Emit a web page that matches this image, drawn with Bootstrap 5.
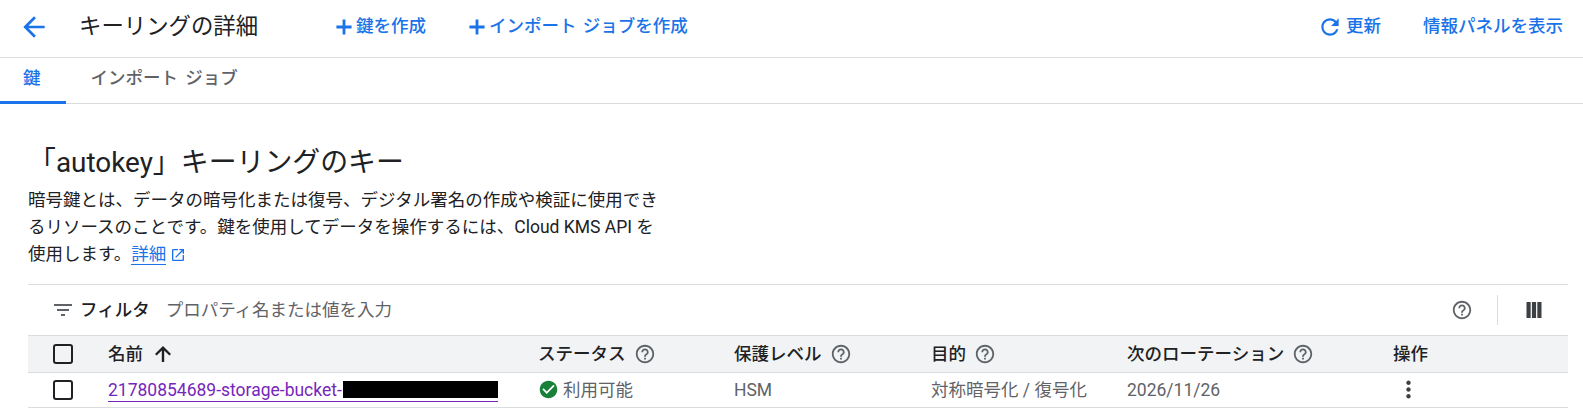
<!DOCTYPE html>
<html lang="ja">
<head>
  <meta charset="UTF-8">
  <meta name="viewport" content="width=device-width, initial-scale=1.0">
  <link href="https://cdn.jsdelivr.net/npm/bootstrap@5.3.0/dist/css/bootstrap.min.css" rel="stylesheet">
  <style>
    body {
      font-family: Roboto, "Noto Sans CJK JP", sans-serif;
      font-size: 17.5px;
      color: #202124;
      background: #fff;
    }
    a { text-decoration: none; }
    .top-bar { height: 58px; border-bottom: 1px solid #dadce0; padding: 0 20px 4px 18px; }
    .back-btn { width: 32px; color: #1a73e8; }
    .page-title { font-size: 22.4px; font-weight: 400; margin: 0 0 0 29px; width: 252px; }
    .blue-act { color: #1a73e8; font-weight: 500; font-size: 17.5px; word-spacing: 2px; }
    .act-gap { margin-right: 38px; }
    .plus-first { margin-right: -1px; }
    .plus-next { margin-right: -1px; }
    .refresh-act { gap: 3px; margin-right: 42px; }
    .tab-strip { height: 46px; border-bottom: 1px solid #dadce0; }
    .tab-item { color: #5f6368; font-weight: 500; padding: 0 25px; height: 45px; line-height: 41px; word-spacing: 3px; }
    .tab-item.on { color: #1a73e8; border-bottom: 3px solid #1a73e8; margin-bottom: -1px; height: 46px; padding-left: 23px; }
    .intro { padding: 42px 15px 0 28px; }
    .intro h2 { font-size: 27.9px; font-weight: 400; margin: 0 0 7px; line-height: 34px; }
    .intro p { width: 640px; line-height: 26.9px; margin: 0 0 16px; }
    .intro p a { color: #1a73e8; border-bottom: 1px solid #1a73e8; }
    .ext-icon { margin-left: 4px; }
    .filter-bar { height: 51px; border-top: 1px solid #dadce0; padding-left: 23px; }
    .filter-label { font-weight: 500; margin-left: 5px; margin-right: 16px; }
    .filter-hint { color: #5f6368; }
    .tools { margin-left: auto; height: 30px; }
    .tools .sep { width: 1px; height: 30px; background: #dadce0; margin: 0 26px 0 24px; }
    .tools svg:last-child { margin-right: 24px; }
    .key-table { width: 100%; table-layout: fixed; margin: 0; border-collapse: collapse; }
    .key-table th, .key-table td { padding: 0; vertical-align: middle; border-bottom: 1px solid #dadce0; font-size: 17.5px; }
    .key-table thead th { background: #f1f3f4; height: 37px; font-weight: 500; border-top: 1px solid #dadce0; color: #202124; }
    .key-table tbody td { height: 35px; color: #5f6368; }
    .box { display: block; width: 20px; height: 20px; border: 2px solid #202124; border-radius: 3px; margin-left: 25px; }
    .key-link { color: #7627bb; border-bottom: 1px solid #7627bb; display: inline-flex; line-height: 21px; }
    .redact { display: inline-block; width: 155px; height: 17px; margin-top: 1px; margin-left: 1px; background: #000; }
    .head-cell { gap: 8px; }
    .kebab { display: block; margin-left: 2px; }
  </style>
  <title>キーリングの詳細</title>
</head>
<body>
  <div class="top-bar d-flex align-items-center">
    <a href="#" class="back-btn d-flex">
      <svg width="32" height="32" viewBox="0 0 24 24" fill="currentColor"><path d="M20 11H7.83l5.59-5.59L12 4l-8 8 8 8 1.41-1.41L7.83 13H20z"/></svg>
    </a>
    <h1 class="page-title">キーリングの詳細</h1>
    <a href="#" class="blue-act act-gap d-flex align-items-center">
      <svg class="plus-first" width="26" height="26" viewBox="0 0 24 24" fill="currentColor"><path d="M19 13.3h-5.7V19h-2.6v-5.7H5v-2.6h5.7V5h2.6v5.7H19z"/></svg>鍵を作成
    </a>
    <a href="#" class="blue-act d-flex align-items-center">
      <svg class="plus-next" width="26" height="26" viewBox="0 0 24 24" fill="currentColor"><path d="M19 13.3h-5.7V19h-2.6v-5.7H5v-2.6h5.7V5h2.6v5.7H19z"/></svg>インポート ジョブを作成
    </a>
    <a href="#" class="blue-act ms-auto refresh-act d-flex align-items-center">
      <svg width="26" height="26" viewBox="0 0 24 24" fill="currentColor"><path d="M17.65 6.35C16.2 4.9 14.21 4 12 4c-4.42 0-7.99 3.58-7.99 8s3.57 8 7.99 8c3.73 0 6.84-2.55 7.73-6h-2.08c-.82 2.33-3.04 4-5.65 4-3.31 0-6-2.69-6-6s2.69-6 6-6c1.66 0 3.14.69 4.22 1.78L13 11h7V4l-2.35 2.35z"/></svg>更新
    </a>
    <a href="#" class="blue-act">情報パネルを表示</a>
  </div>

  <div class="tab-strip d-flex">
    <a href="#" class="tab-item on">鍵</a>
    <a href="#" class="tab-item">インポート ジョブ</a>
  </div>

  <div class="intro">
    <h2>「autokey」キーリングのキー</h2>
    <p>暗号鍵とは、データの暗号化または復号、デジタル署名の作成や検証に使用できるリソースのことです。鍵を使用してデータを操作するには、Cloud KMS API を使用します。<a href="#">詳細</a><svg class="ext-icon" width="16" height="16" viewBox="0 0 24 24" fill="#1a73e8"><path d="M19 19H5V5h7V3H5a2 2 0 0 0-2 2v14a2 2 0 0 0 2 2h14c1.1 0 2-.9 2-2v-7h-2v7zM14 3v2h3.59l-9.83 9.83 1.41 1.41L19 6.41V10h2V3h-7z"/></svg></p>

    <div class="filter-bar d-flex align-items-center">
      <svg width="24" height="24" viewBox="0 0 24 24" fill="#5f6368"><path d="M10 18h4v-2h-4v2zM3 6v2h18V6H3zm3 7h12v-2H6v2z"/></svg>
      <span class="filter-label">フィルタ</span>
      <span class="filter-hint">プロパティ名または値を入力</span>
      <div class="tools d-flex align-items-center">
        <svg width="22" height="22" viewBox="0 0 24 24" fill="#5f6368"><path d="M11 18h2v-2h-2v2zm1-16C6.48 2 2 6.48 2 12s4.48 10 10 10 10-4.48 10-10S17.52 2 12 2zm0 18c-4.41 0-8-3.59-8-8s3.59-8 8-8 8 3.59 8 8-3.59 8-8 8zm0-14c-2.21 0-4 1.79-4 4h2c0-1.1.9-2 2-2s2 .9 2 2c0 2-3 1.75-3 5h2c0-2.25 3-2.5 3-5 0-2.21-1.79-4-4-4z"/></svg>
        <span class="sep"></span>
        <svg width="20" height="20" viewBox="0 0 24 24" fill="#3c4043"><path d="M3 2.5h5v19H3zM9.5 2.5h5v19h-5zM16 2.5h5v19h-5z"/></svg>
      </div>
    </div>

    <table class="key-table">
      <colgroup>
        <col style="width:80px"><col style="width:430px"><col style="width:196px"><col style="width:197px"><col style="width:196px"><col style="width:266px"><col>
      </colgroup>
      <thead>
        <tr>
          <th><span class="box"></span></th>
          <th>
            <div class="d-flex align-items-center head-cell">名前
              <svg width="24" height="24" viewBox="0 0 24 24" fill="#202124"><path d="M4 12l1.6 1.6L10.8 8.4V20h2.4V8.4l5.2 5.2L20 12l-8-8-8 8z"/></svg>
            </div>
          </th>
          <th><div class="d-flex align-items-center head-cell">ステータス <svg width="22" height="22" viewBox="0 0 24 24" fill="#5f6368"><path d="M11 18h2v-2h-2v2zm1-16C6.48 2 2 6.48 2 12s4.48 10 10 10 10-4.48 10-10S17.52 2 12 2zm0 18c-4.41 0-8-3.59-8-8s3.59-8 8-8 8 3.59 8 8-3.59 8-8 8zm0-14c-2.21 0-4 1.79-4 4h2c0-1.1.9-2 2-2s2 .9 2 2c0 2-3 1.75-3 5h2c0-2.25 3-2.5 3-5 0-2.21-1.79-4-4-4z"/></svg></div></th>
          <th><div class="d-flex align-items-center head-cell">保護レベル <svg width="22" height="22" viewBox="0 0 24 24" fill="#5f6368"><path d="M11 18h2v-2h-2v2zm1-16C6.48 2 2 6.48 2 12s4.48 10 10 10 10-4.48 10-10S17.52 2 12 2zm0 18c-4.41 0-8-3.59-8-8s3.59-8 8-8 8 3.59 8 8-3.59 8-8 8zm0-14c-2.21 0-4 1.79-4 4h2c0-1.1.9-2 2-2s2 .9 2 2c0 2-3 1.75-3 5h2c0-2.25 3-2.5 3-5 0-2.21-1.79-4-4-4z"/></svg></div></th>
          <th><div class="d-flex align-items-center head-cell">目的 <svg width="22" height="22" viewBox="0 0 24 24" fill="#5f6368"><path d="M11 18h2v-2h-2v2zm1-16C6.48 2 2 6.48 2 12s4.48 10 10 10 10-4.48 10-10S17.52 2 12 2zm0 18c-4.41 0-8-3.59-8-8s3.59-8 8-8 8 3.59 8 8-3.59 8-8 8zm0-14c-2.21 0-4 1.79-4 4h2c0-1.1.9-2 2-2s2 .9 2 2c0 2-3 1.75-3 5h2c0-2.25 3-2.5 3-5 0-2.21-1.79-4-4-4z"/></svg></div></th>
          <th><div class="d-flex align-items-center head-cell">次のローテーション <svg width="22" height="22" viewBox="0 0 24 24" fill="#5f6368"><path d="M11 18h2v-2h-2v2zm1-16C6.48 2 2 6.48 2 12s4.48 10 10 10 10-4.48 10-10S17.52 2 12 2zm0 18c-4.41 0-8-3.59-8-8s3.59-8 8-8 8 3.59 8 8-3.59 8-8 8zm0-14c-2.21 0-4 1.79-4 4h2c0-1.1.9-2 2-2s2 .9 2 2c0 2-3 1.75-3 5h2c0-2.25 3-2.5 3-5 0-2.21-1.79-4-4-4z"/></svg></div></th>
          <th>操作</th>
        </tr>
      </thead>
      <tbody>
        <tr>
          <td><span class="box"></span></td>
          <td><a href="#" class="key-link">21780854689-storage-bucket-<span class="redact"></span></a></td>
          <td>
            <div class="d-flex align-items-center gap-1">
              <svg width="21" height="21" viewBox="0 0 24 24" fill="#188038"><path d="M12 2C6.48 2 2 6.48 2 12s4.48 10 10 10 10-4.48 10-10S17.52 2 12 2zm-2 15l-5-5 1.41-1.41L10 14.17l7.59-7.59L19 8l-9 9z"/></svg>利用可能
            </div>
          </td>
          <td>HSM</td>
          <td>対称暗号化 / 復号化</td>
          <td>2026/11/26</td>
          <td>
            <svg class="kebab" width="27" height="27" viewBox="0 0 24 24" fill="#3c4043"><path d="M12 8c1.1 0 2-.9 2-2s-.9-2-2-2-2 .9-2 2 .9 2 2 2zm0 2c-1.1 0-2 .9-2 2s.9 2 2 2 2-.9 2-2-.9-2-2-2zm0 6c-1.1 0-2 .9-2 2s.9 2 2 2 2-.9 2-2-.9-2-2-2z"/></svg>
          </td>
        </tr>
      </tbody>
    </table>
  </div>

  <script src="https://cdn.jsdelivr.net/npm/bootstrap@5.3.0/dist/js/bootstrap.bundle.min.js"></script>
</body>
</html>
